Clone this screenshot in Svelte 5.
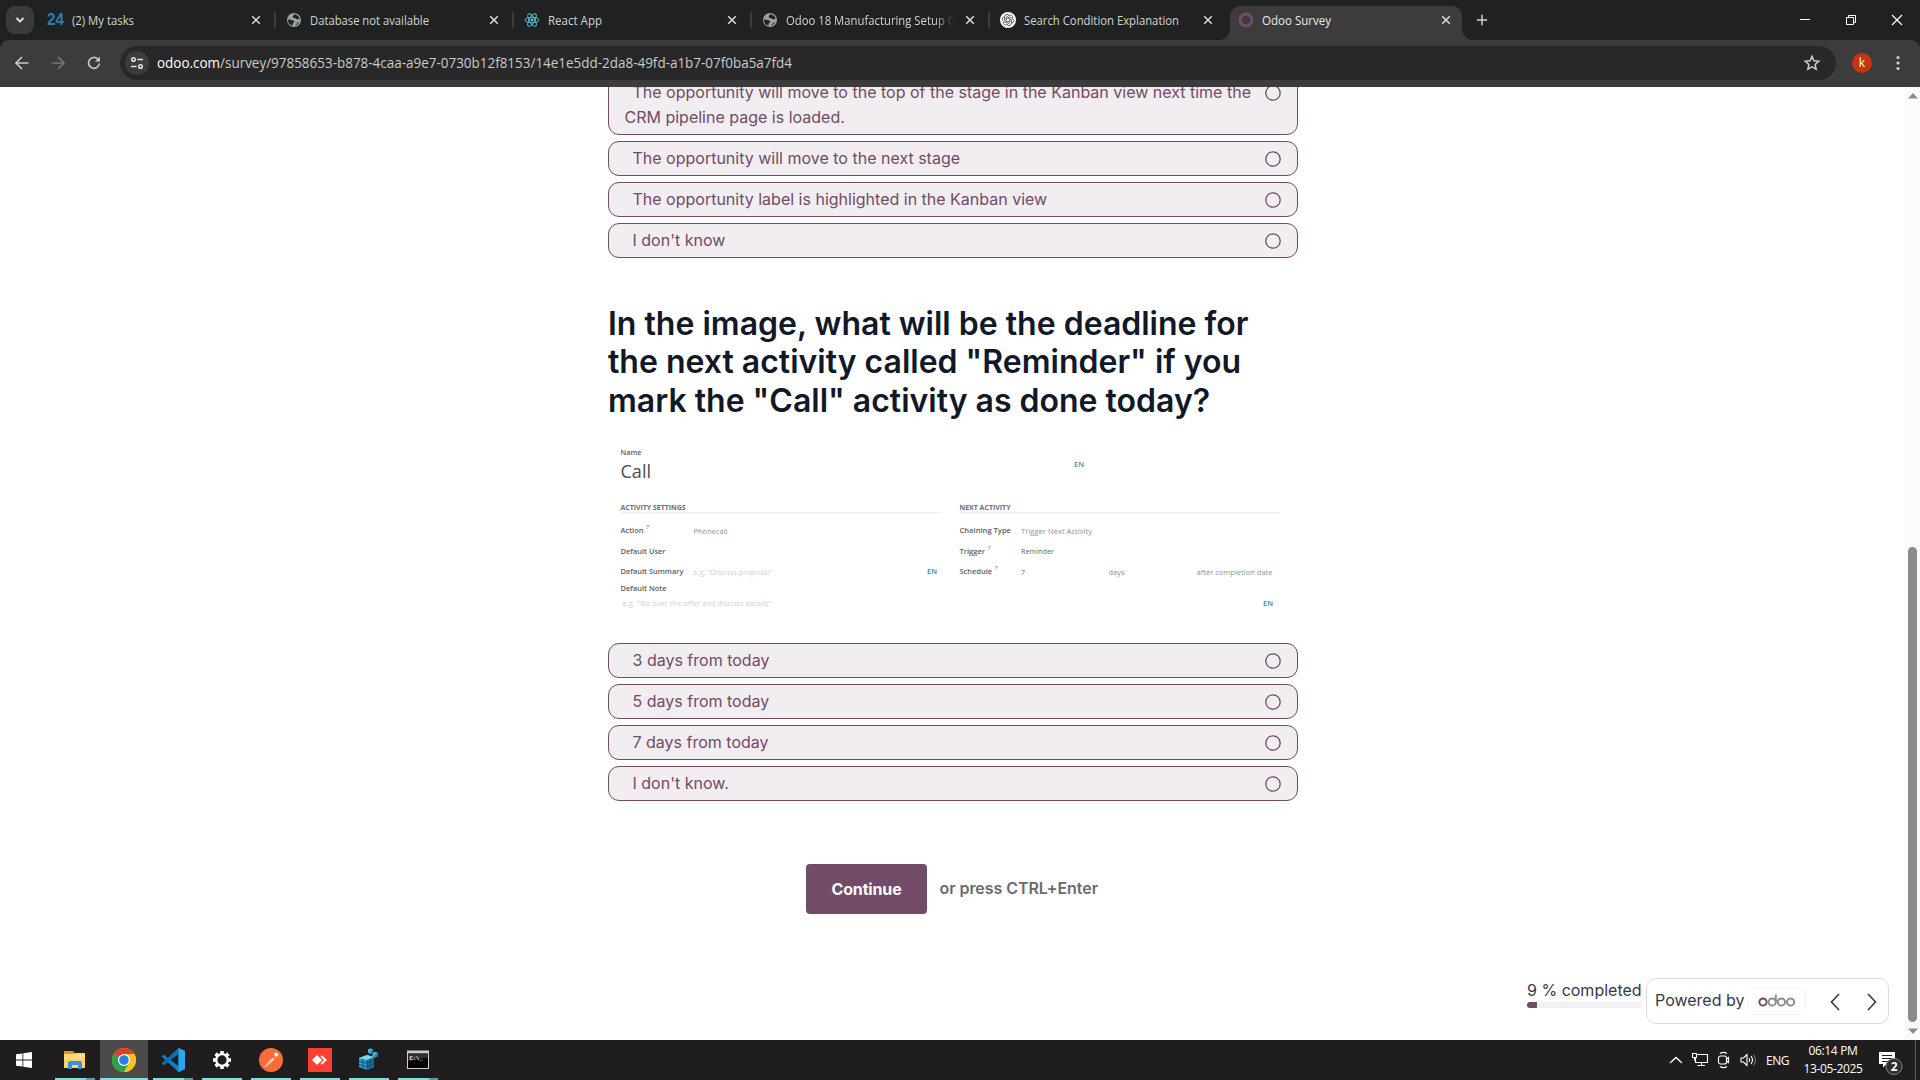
<script>
  const tabs = [
    { title: '(2) My tasks', icon: 'b24', w: 62 },
    { title: 'Database not available', icon: 'globe', w: 119 },
    { title: 'React App', icon: 'react', w: 54 },
    { title: 'Odoo 18 Manufacturing Setup Guide', icon: 'globe', w: 193, fade: true },
    { title: 'Search Condition Explanation', icon: 'gpt', w: 155 },
    { title: 'Odoo Survey', icon: 'odoo', w: 69, active: true },
  ];
  const firstAnswers = [
    'The opportunity will move to the next stage',
    'The opportunity label is highlighted in the Kanban view',
    "I don't know",
  ];
  const secondAnswers = ['3 days from today', '5 days from today', '7 days from today', "I don't know."];
  const apps = [
    { id: 'files', stacked: true },
    { id: 'chrome', active: true },
    { id: 'code', stacked: true },
    { id: 'settings' },
    { id: 'postman' },
    { id: 'anydesk' },
    { id: 'regedit' },
    { id: 'cmd', stacked: true },
  ];
  // x, y, text, width, class
  const formTexts = [
    [12.5, 15, 'Name', 21, 'lab'],
    [12.5, 37.5, 'Call', 30.5, 'big'],
    [466, 27, 'EN', 10, 'en'],
    [12.5, 70, 'ACTIVITY SETTINGS', 65, 'sec'],
    [351.5, 70, 'NEXT ACTIVITY', 51, 'sec'],
    [12.5, 93, 'Action', 23, 'lab'],
    [38, 89, '?', 3, 'q'],
    [85.5, 93.5, 'Phonecall', 34, 'val'],
    [12.5, 113.5, 'Default User', 45, 'lab'],
    [12.5, 134, 'Default Summary', 63, 'lab'],
    [85.5, 134.5, 'e.g. "Discuss proposal"', 79, 'ph'],
    [319, 134, 'EN', 10, 'en'],
    [12.5, 150.700, 'Default Note', 46, 'lab'],
    [14.5, 165.5, 'e.g. "Go over the offer and discuss details"', 149, 'ph'],
    [351.5, 93, 'Chaining Type', 51.5, 'lab'],
    [413, 93.5, 'Trigger Next Activity', 71, 'val'],
    [351.5, 113.5, 'Trigger', 25.5, 'lab'],
    [379.5, 109.5, '?', 3, 'q'],
    [413, 114, 'Reminder', 33, 'val dark'],
    [351.5, 134, 'Schedule', 32.5, 'lab'],
    [386.5, 130, '?', 3, 'q'],
    [413, 134.5, '7', 4, 'val dark'],
    [500.5, 134.5, 'days', 16, 'val'],
    [588.5, 134.5, 'after completion date', 76, 'val'],
    [655, 165.5, 'EN', 10, 'en'],
  ];
</script>

{#snippet favicon(name)}
  <svg class="fav" width="16" height="16" viewBox="0 0 16 16">
    {#if name === 'b24'}
      <text x="-1" y="13.4" class="b24" textLength="17" lengthAdjust="spacingAndGlyphs">24</text>
    {:else if name === 'globe'}
      <circle cx="8" cy="8" r="7" fill="#9aa0a6" />
      <path d="M8.2 2.2c2.6.2 4.8 2 5.4 4.6-.9-.2-1.7.5-2.6.5-.8 0-1-.9-1.8-1.1-.8-.3-1.8.2-2.3-.5-.5-.8.4-1.4.6-2.1.1-.5.2-1 .7-1.4zM2.2 7.2c1.500.3 2.300.9 3.900 1 1.300.1 2.200.6 2.100 1.600-.1 1.100-1.500 1.100-1.600 2.200 0 .6 0 1.200-.2 1.700A5.900 5.900 0 0 1 2.200 7.200zM9.400 13.800c.1-1.500 1.200-1.600 1.800-2.500.4-.6.8-1.100 1.900-1.200a6 6 0 0 1-3.700 3.700z" fill="#202221" />
    {:else if name === 'react'}
      <g fill="none" stroke="#58c4dc" stroke-width="0.9">
        <ellipse cx="8" cy="8" rx="7" ry="2.7" />
        <ellipse cx="8" cy="8" rx="7" ry="2.7" transform="rotate(60 8 8)" />
        <ellipse cx="8" cy="8" rx="7" ry="2.7" transform="rotate(120 8 8)" />
      </g>
      <circle cx="8" cy="8" r="1.4" fill="#58c4dc" />
    {:else if name === 'gpt'}
      <circle cx="8" cy="8" r="8" fill="#fff" />
      <g fill="none" stroke="#333" stroke-width="0.7">
        {#each [0, 60, 120, 180, 240, 300] as a}
          <path d="M6.200 9V5.200L9 3.400A2.500 2.500 0 0 1 12.700 6.200" transform="rotate({a} 8 8)" />
        {/each}
      </g>
    {:else}
      <circle cx="8" cy="8" r="5.900" fill="none" stroke="#714b67" stroke-width="3" />
    {/if}
  </svg>
{/snippet}

{#snippet radio()}
  <svg class="radio" width="16" height="16"><circle cx="8" cy="8" r="7.200" fill="none" stroke="#714b67" stroke-width="1.300" /></svg>
{/snippet}

{#snippet answer(text)}
  <label class="answer">
    <span class="txt">{text}</span>
    {@render radio()}
  </label>
{/snippet}

<div class="screen">
  <header class="strip">
    <button class="search" aria-label="Search tabs">
      <svg width="10" height="10" viewBox="0 0 10 10"><path d="M1.500 3l3.500 3.500L8.500 3" fill="none" stroke="#e3e3e3" stroke-width="1.800" /></svg>
    </button>
    <div class="tabs">
      {#each tabs as t, i}
        <div class="tab" class:active={t.active} class:sep={i < 4}>
          {@render favicon(t.icon)}
          <div class="title" class:fade={t.fade}>
            <svg width={t.fade ? 160 : t.w + 4} height="22"><text x="0" y="15.500" textLength={t.w} lengthAdjust="spacingAndGlyphs">{t.title}</text></svg>
          </div>
          <svg class="x" width="10" height="10" viewBox="0 0 10 10"><path d="M1.200 1.200l7.600 7.600M8.800 1.200L1.200 8.800" stroke="#dcdcdc" stroke-width="1.500" /></svg>
        </div>
      {/each}
    </div>
    <svg class="plus" width="12" height="12" viewBox="0 0 12 12"><path d="M6 .8v10.400M.8 6h10.400" stroke="#d0d0d0" stroke-width="1.500" /></svg>
    <div class="win">
      <svg width="46" height="40"><path d="M18 19.500h10" stroke="#fff" /></svg>
      <svg width="46" height="40"><path d="M18.500 17.500h7v7h-7zM20.500 17.500v-2h7v7h-2" fill="none" stroke="#fff" /></svg>
      <svg width="46" height="40"><path d="M18 15l10 10M28 15l-10 10" stroke="#fff" stroke-width="1.200" /></svg>
    </div>
  </header>

  <div class="toolbar">
    <svg class="nav" width="36" height="36"><path d="M24.500 18H12M18 12l-6 6 6 6" fill="none" stroke="#c7c7c7" stroke-width="1.700" /></svg>
    <svg class="nav" width="36" height="36"><path d="M11.500 18H24M18 12l6 6-6 6" fill="none" stroke="#757575" stroke-width="1.700" /></svg>
    <svg class="nav" width="36" height="36"><path d="M23.300 18.500a5.400 5.400 0 1 1-1.500-4.400l1.700 1.700" fill="none" stroke="#c7c7c7" stroke-width="1.700" /><path d="M24 11.500v5h-5z" fill="#c7c7c7" /></svg>
    <div class="omni">
      <span class="site">
        <svg width="16" height="16" viewBox="0 0 16 16"><g fill="none" stroke="#e3e3e3" stroke-width="1.500"><circle cx="4.500" cy="4.500" r="1.800" /><path d="M8.500 4.500h5.500M2 11.500h5.500" /><circle cx="11.500" cy="11.500" r="1.800" /></g></svg>
      </span>
      <svg class="url" width="640" height="24"><text x="0" y="17" textLength="635" lengthAdjust="spacingAndGlyphs"><tspan fill="#fff">odoo.com</tspan><tspan>/survey/97858653-b878-4caa-a9e7-0730b12f8153/14e1e5dd-2da8-49fd-a1b7-07f0ba5a7fd4</tspan></text></svg>
      <svg class="star" width="18" height="18" viewBox="0 0 18 18"><path d="M9 2.300l1.900 4.500 4.900.4-3.700 3.200 1.100 4.800L9 12.700l-4.200 2.500 1.100-4.800-3.700-3.200 4.900-.4z" fill="none" stroke="#d0d0d0" stroke-width="1.400" /></svg>
    </div>
    <span class="avatar">k</span>
    <svg class="dots" width="6" height="16"><g fill="#d0d0d0"><circle cx="3" cy="2.500" r="1.600" /><circle cx="3" cy="8" r="1.600" /><circle cx="3" cy="13.500" r="1.600" /></g></svg>
  </div>

  <div class="page">
    <main>
      <div class="answers first">
        <label class="answer tall">
          <span class="txt">The opportunity will move to the top of the stage in the Kanban view next time the CRM pipeline page is loaded.</span>
          {@render radio()}
        </label>
        {#each firstAnswers as a}{@render answer(a)}{/each}
      </div>

      <h1>In the image, what will be the deadline for the next activity called "Reminder" if you mark the "Call" activity as done today?</h1>

      <svg class="form" width="690" height="180" viewBox="0 0 690 180">
        <path d="M13 72.800h320M352 72.800h320" stroke="#e8eaec" />
        {#each formTexts as [x, y, text, w, cls]}
          <text {x} {y} textLength={w} lengthAdjust="spacingAndGlyphs" class={cls}>{text}</text>
        {/each}
      </svg>

      <div class="answers">
        {#each secondAnswers as a}{@render answer(a)}{/each}
      </div>

      <div class="submit">
        <button class="continue">Continue</button>
        <span>or press CTRL+Enter</span>
      </div>
    </main>

    <footer>
      <div class="progress">
        <span>9 % completed</span>
        <div class="bar"><i></i></div>
      </div>
      <div class="powered">
        <span>Powered by</span>
        <span class="logo">
          <svg width="38" height="14" viewBox="0 0 38 14" fill="none" stroke-width="2">
            <circle cx="5" cy="8" r="3.600" stroke="#714b67" />
            <g stroke="#8f8f8f"><circle cx="14.200" cy="8" r="3.600" /><path d="M17.800 0.500V8" /><circle cx="23.400" cy="8" r="3.600" /><circle cx="32.600" cy="8" r="3.600" /></g>
          </svg>
        </span>
        <svg class="prev" width="10" height="18"><path d="M9 1L1.500 9 9 17" fill="none" stroke="#374151" stroke-width="1.700" /></svg>
        <svg class="next" width="10" height="18"><path d="M1 1l7.500 8L1 17" fill="none" stroke="#374151" stroke-width="1.700" /></svg>
      </div>
    </footer>

    <aside class="scroll">
      <svg width="10" height="6"><path d="M0 5.500L5 0l5 5.500z" fill="#8b8b8b" /></svg>
      <div class="thumb"></div>
      <svg width="10" height="6"><path d="M0 0.500L5 6l5-5.500z" fill="#8b8b8b" /></svg>
    </aside>
  </div>

  <div class="taskbar">
    <div class="start">
      <svg width="16" height="16" viewBox="0 0 16 16" fill="#fff"><path d="M0 2.300L6.500 1.400V7.600H0zM7.300 1.300L16 0v7.600H7.300zM0 8.400h6.500v6.200L0 13.700zM7.300 8.400H16V16l-8.700-1.300z" /></svg>
    </div>
    {#each apps as app}
      <div class="app" class:on={app.active} class:stacked={app.stacked}>
        <svg width="24" height="24" viewBox="0 0 24 24">
          {#if app.id === 'files'}
            <path d="M1 3h9l1 2h11v15H1z" fill="#f8d470" /><path d="M1 3h9l1 3H1z" fill="#d99a13" /><path d="M1 7h21v4H1z" fill="#ffdc7c" />
            <path d="M5 21v-6.500L6.500 13h11l1.500 1.500V21h-4v-4H9v4z" fill="#3b8edb" />
          {:else if app.id === 'chrome'}
            <circle cx="12" cy="12" r="12" fill="#fbc116" />
            <path d="M12 12L1.600 6A12 12 0 0 1 22.400 6z" fill="#e33b2e" />
            <path d="M12 12L1.600 6A12 12 0 0 0 12 24l5.200-9z" fill="#2ba24c" />
            <path d="M12 6h10.400a12 12 0 0 1-10.400 18l5.200-9z" fill="#fbc116" />
            <circle cx="12" cy="12" r="6" fill="#fff" /><circle cx="12" cy="12" r="4.800" fill="#2f7de9" />
          {:else if app.id === 'code'}
            <path d="M17.500 0L24 3v18l-6.500 3L0.500 8.500 2.500 6.500 17.500 18z" fill="#0b7fc7" />
            <path d="M17.500 0L0.500 15.500l2 2L17.500 6z" fill="#0b6fb5" />
            <path d="M17.500 0L24 3v18l-6.500 3z" fill="#2ba7f0" />
          {:else if app.id === 'settings'}
            <circle cx="12" cy="12" r="5.800" fill="none" stroke="#fff" stroke-width="2.300" />
            {#each [0, 45, 90, 135, 180, 225, 270, 315] as a}
              <path d="M10.200 3h3.600v3h-3.600z" fill="#fff" transform="rotate({a} 12 12)" />
            {/each}
          {:else if app.id === 'postman'}
            <circle cx="12" cy="12" r="12" fill="#ff6c37" />
            <path d="M5 19.500l7.500-8.800 3.200-1.900-1.200 3.200L7 18.600z" fill="#fff" /><circle cx="17.300" cy="6.600" r="2" fill="#fff" /><path d="M9 16l6-7" stroke="#ff6c37" stroke-width=".6" />
          {:else if app.id === 'anydesk'}
            <path d="M0 0h24v24H0z" fill="#fb3f35" /><path d="M4 12l5-5 5 5-5 5z" fill="#fff" /><path d="M13.300 8l4.200 4-4.200 4" fill="none" stroke="#fff" stroke-width="2" />
          {:else if app.id === 'regedit'}
            <path d="M2 10l8-3 7 2v10l-7 3-8-3z" fill="#2b9fd0" /><path d="M10 12l7-3v10l-7 3z" fill="#146d9c" /><path d="M2 10l8-3 7 2-7 3z" fill="#7fd4f2" />
            <path d="M2 13.300l8 2 7-3M2 16.400l8 2.300 7-3M6 11v9.500M10 12v10M13.500 10.500v10" stroke="#0d4768" stroke-width=".8" fill="none" />
            <path d="M11 1.500L13.500.3 16 1.500v3L13.500 6 11 4.500zM15.500 5l2.700-1.200L21 5v3.200l-2.800 1.300-2.700-1.300z" fill="#45b4e0" /><path d="M13.500 3L16 1.500v3L13.500 6zM18.200 6.500L21 5v3.200l-2.800 1.300z" fill="#1c7cab" />
          {:else}
            <path d="M1 2.500h22v18.500H1z" fill="#c8cdd0" /><path d="M2 5.500h20V20H2z" fill="#050505" /><path d="M2 5.500h20v4L2 13z" fill="#303030" />
            <text x="3.500" y="12" class="prompt">C:\_</text>
          {/if}
        </svg>
      </div>
    {/each}
    <div class="tray">
      <svg width="14" height="8"><path d="M1 7l6-5.500L13 7" fill="none" stroke="#fff" stroke-width="1.300" /></svg>
      <svg class="net" width="18" height="16"><g fill="none" stroke="#fff" stroke-width="1.100"><path d="M5 2.500h11.500v8H4.500V6M10.500 10.500v3M6.500 13.500h7.500M1.500 1.500h4v4h-4zM3.500 5.500v3" /></g></svg>
      <svg class="cam" width="14" height="18"><g fill="none" stroke="#fff" stroke-width="1.200"><rect x="1.500" y="5" width="8" height="8" rx="2" /><path d="M9.500 8l2-1.500v5l-2-1.500M3 2.500Q6.500 .2 10 2.500M3 15.500q3.500 2.300 7 0" /></g></svg>
      <svg class="vol" width="17" height="14"><g fill="none" stroke="#fff" stroke-width="1.100"><path d="M1 5h2.500L7 1.500v11L3.500 9H1zM9 5q1.500 2 0 4M11 3.200q3 3.800 0 7.600" /><path d="M13.300 1.500q4.500 5.500 0 11" stroke="#777" /></g></svg>
      <span class="lang">ENG</span>
      <div class="clock"><span>06:14 PM</span><span>13-05-2025</span></div>
      <div class="notes">
        <svg width="26" height="26"><path d="M1 1h16v12H8.500L5 16.500V13H1z" fill="#fff" /><path d="M4 4.500h10M4 7.500h10M4 10.500h6" stroke="#1e1d1d" /><circle cx="16" cy="15.500" r="8" fill="#2e2e2e" stroke="#858585" /><text x="12.800" y="20">2</text></svg>
      </div>
      <i class="peek"></i>
    </div>
  </div>
</div>

<style>
  :global(body) { margin: 0; overflow: hidden; }
  .screen { width: 1920px; height: 1080px; display: flex; flex-direction: column; background: #fff; font-family: Inter, sans-serif; overflow: hidden; }
  button { border: 0; padding: 0; font: inherit; }
  svg { flex: none; display: block; overflow: visible; }

  .strip { height: 40px; flex: none; background: #202221; display: flex; align-items: center; }
  .search { width: 28px; height: 28px; margin-left: 6px; border-radius: 9px; background: #3b3b3b; display: grid; place-items: center; }
  .tabs { display: flex; height: 40px; margin-left: 4px; }
  .tab { width: 238px; height: 40px; box-sizing: border-box; padding: 0 15px 0 10px; display: flex; align-items: center; position: relative; }
  .tab.sep::after { content: ''; position: absolute; right: 0; top: 12px; width: 2px; height: 16px; background: #3e3e3e; }
  .tab.active { width: 232px; margin: 6px 0 0 2px; height: 34px; padding: 0 11px 6px 8px; background: #3c3c3c; border-radius: 10px 10px 0 0; }
  .tab.active::before, .tab.active::after { content: ''; position: absolute; bottom: 0; width: 10px; height: 10px; }
  .tab.active::before { left: -10px; background: radial-gradient(circle at 0 0, #202221 9.500px, #3c3c3c 10px); }
  .tab.active::after { right: -10px; background: radial-gradient(circle at 100% 0, #202221 9.500px, #3c3c3c 10px); }
  .title { flex: 1; margin-left: 8px; min-width: 0; }
  .title text { font: 12px 'Open Sans', sans-serif; fill: #d2d4d3; }
  .active .title text { fill: #e8e8e8; }
  .title.fade { overflow: hidden; margin-right: 10px; mask-image: linear-gradient(90deg, #000 148px, transparent 168px); }
  .b24 { font: bold 16px 'Liberation Sans', sans-serif; fill: #2d7ab8; }
  .plus { margin-left: 14px; }
  .win { margin-left: auto; display: flex; }

  .toolbar { height: 47px; flex: none; box-sizing: border-box; background: #3c3c3c; display: flex; align-items: center; padding: 0 0 1px 4px; border-radius: 9px 9px 0 0; box-shadow: 0 -10px 0 0 #202221; clip-path: inset(0); background-clip: border-box; }
  .omni { width: 1716px; height: 34px; margin-left: 8px; border-radius: 17px; background: #282828; display: flex; align-items: center; }
  .site { width: 24px; height: 24px; margin-left: 5px; border-radius: 50%; background: #3c3c3c; display: grid; place-items: center; }
  .url { margin-left: 8px; }
  .url text { font: 14px 'Open Sans', sans-serif; fill: #c9cac9; }
  .star { margin-left: auto; margin-right: 15px; }
  .avatar { width: 20px; height: 20px; margin-left: 16px; border-radius: 50%; background: #c5360e; color: #fff; font: 12px/19px 'Open Sans', sans-serif; text-align: center; }
  .dots { margin-left: 23px; }

  .page { height: 953px; flex: none; overflow: hidden; display: grid; grid-template-columns: 608px 690px 1fr 15px; }
  main { grid-column: 2; }
  .answers { display: flex; flex-direction: column; gap: 6px; }
  .answers.first { margin-top: -11px; }
  .answer { height: 35px; box-sizing: border-box; border: 1px solid #714b67; border-radius: 11px; background: #f1edf0; color: #714b67; display: flex; justify-content: space-between; padding: 4px 16px 4px 15.500px; }
  .answer.tall { height: 59px; padding-top: 3px; }
  .txt { width: 640px; font-size: 16px; line-height: 24.600px; text-indent: 8px; }
  .radio { margin-top: 5px; }
  h1 { margin: 47px 0 0; width: 680px; font-size: 32px; line-height: 38.400px; font-weight: 600; color: #111827; }
  .form { margin-top: 20px; }
  .form + .answers { margin-top: 23px; }
  .form text { font: 7.500px 'Open Sans', sans-serif; }
  .form .lab { fill: #5a6066; font-weight: 600; }
  .form .big { font-size: 19px; fill: #4a4a4a; }
  .form .sec { font-size: 7px; font-weight: 700; fill: #6b7075; }
  .form .val { fill: #8d9298; }
  .form .dark { fill: #62676c; }
  .form .ph { fill: #ced1d5; }
  .form .en { fill: #3c8f96; font-weight: 600; }
  .form .q { font-size: 5.500px; fill: #3c8f96; }
  .submit { margin-top: 63px; padding-left: 198px; display: flex; align-items: center; gap: 12.500px; font-size: 16px; font-weight: 600; color: #6b6b6d; letter-spacing: -0.050px; }
  .submit span { padding-bottom: 2px; }
  .continue { width: 121px; height: 50px; border-radius: 4px; background: #714b67; color: #fff; font-weight: 700; letter-spacing: -0.150px; }

  footer { grid-column: 3; align-self: end; justify-self: end; display: flex; gap: 4px; margin: 0 16px 16px 0; color: #343a44; font-size: 16px; }
  .progress { width: 115px; padding-top: 1px; }
  .progress span { display: block; line-height: 22px; height: 23px; white-space: nowrap; }
  .bar { height: 6px; border-radius: 3px; background: #f0f1f4; overflow: hidden; }
  .bar i { display: block; width: 10px; height: 6px; background: #714b67; }
  .powered { width: 243px; height: 46px; box-sizing: border-box; border: 1px solid #dcdcde; border-radius: 10px; display: flex; align-items: center; padding-left: 8px; }
  .powered > span:first-child { width: 93px; padding-bottom: 2px; white-space: nowrap; }
  .logo { width: 56px; height: 26px; border: 1px solid #f6f6f7; border-radius: 4px; display: grid; place-items: center; margin-bottom: 1px; }
  .prev { margin-left: 24px; margin-top: 2px; }
  .next { margin-left: 27px; margin-top: 2px; }

  .scroll { grid-column: 4; background: #fbfbfb; display: flex; flex-direction: column; align-items: center; padding: 6px 1px 6px 1px; }
  .thumb { width: 9px; height: 475px; border-radius: 5px; background: #8b8b8b; margin: auto 0 6px; }

  .taskbar { height: 40px; flex: none; background: #1f1d1e; display: flex; }
  .start { width: 48px; display: grid; place-items: center; margin-right: 2px; }
  .app { width: 49px; display: grid; place-items: center; position: relative; }
  .app::after { content: ''; position: absolute; left: 5px; bottom: 0; width: 40px; height: 2px; background: #86dbe3; }
  .app.stacked::after { background: linear-gradient(90deg, #86dbe3 31px, #5f9ba1 31px); }
  .app.on { background: linear-gradient(90deg, transparent 1px, #4c4a4b 1px); }
  .app.on::after { left: 1px; width: 48px; }
  .app:last-of-type svg { margin-right: 1px; }
  .prompt { font: bold 5.500px 'Liberation Mono', monospace; fill: #fff; }
  .tray { margin-left: auto; display: flex; align-items: center; color: #fff; font: 12px 'Open Sans', sans-serif; }
  .net { margin-left: 8px; }
  .cam { margin-left: 8px; }
  .vol { margin-left: 9px; }
  .lang { width: 24px; margin-left: 9px; letter-spacing: -0.450px; }
  .clock { width: 70px; margin-left: 8px; display: flex; flex-direction: column; align-items: center; line-height: 18px; letter-spacing: -0.350px; }
  .notes { margin-left: 10px; margin-top: 8px; }
  .notes text { font: bold 12px 'Open Sans', sans-serif; fill: #fff; }
  .peek { width: 1px; height: 40px; margin: 0 4px 0 11px; background: #5c5c5c; }
</style>
